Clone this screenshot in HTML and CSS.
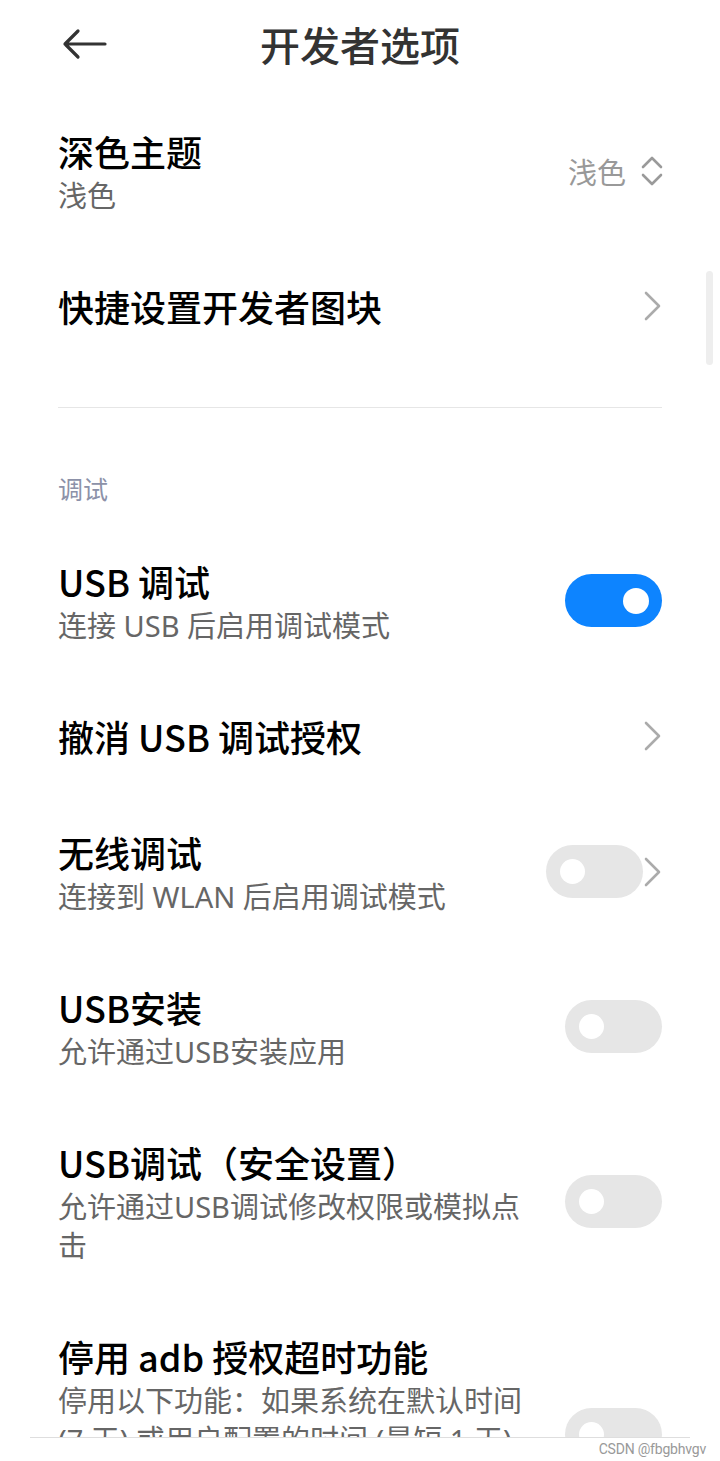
FILE: index.html
```html
<!DOCTYPE html>
<html lang="zh-CN">
<head>
<meta charset="utf-8">
<title>开发者选项</title>
<link rel="stylesheet" href="styles.css">
</head>
<body>
<div class="screen">
  <header class="topbar">
    <div class="back">
      <svg width="46" height="32" viewBox="0 0 46 32"><path d="M4 16 H44 M17 3 L4 16 L17 29" fill="none" stroke="#333" stroke-width="3.2" stroke-linecap="round" stroke-linejoin="round"/></svg>
    </div>
    <h1 class="title-main">开发者选项</h1>
    <div></div>
  </header>

  <main class="list">
    <div class="row">
      <div class="text"><div class="title">深色主题</div><div class="sub">浅色</div></div>
      <div class="value">浅色
        <svg class="updown" width="22" height="32" viewBox="0 0 22 32"><path d="M2 12 L11 3 L20 12 M2 20 L11 29 L20 20" fill="none" stroke="#9a9a9a" stroke-width="2.6" stroke-linecap="round" stroke-linejoin="round"/></svg>
      </div>
    </div>
    <div class="row">
      <div class="text"><div class="title">快捷设置开发者图块</div></div>
      <svg class="chev" width="17" height="30" viewBox="0 0 17 30"><path d="M2 2 L15 15 L2 28" fill="none" stroke="#ababab" stroke-width="2.6" stroke-linecap="round" stroke-linejoin="round"/></svg>
    </div>

    <div class="divider"></div>
    <div class="section">调试</div>

    <div class="row">
      <div class="text"><div class="title">USB 调试</div><div class="sub">连接 USB 后启用调试模式</div></div>
      <div class="switch on"><span class="knob"></span></div>
    </div>
    <div class="row">
      <div class="text"><div class="title">撤消 USB 调试授权</div></div>
      <svg class="chev" width="17" height="30" viewBox="0 0 17 30"><path d="M2 2 L15 15 L2 28" fill="none" stroke="#ababab" stroke-width="2.6" stroke-linecap="round" stroke-linejoin="round"/></svg>
    </div>
    <div class="row">
      <div class="text"><div class="title">无线调试</div><div class="sub">连接到 WLAN 后启用调试模式</div></div>
      <div class="combo">
        <div class="switch"><span class="knob"></span></div>
        <svg class="chev" width="17" height="30" viewBox="0 0 17 30"><path d="M2 2 L15 15 L2 28" fill="none" stroke="#ababab" stroke-width="2.6" stroke-linecap="round" stroke-linejoin="round"/></svg>
      </div>
    </div>
    <div class="row">
      <div class="text"><div class="title">USB安装</div><div class="sub">允许通过USB安装应用</div></div>
      <div class="switch"><span class="knob"></span></div>
    </div>
    <div class="row">
      <div class="text"><div class="title">USB调试（安全设置）</div><div class="sub">允许通过USB调试修改权限或模拟点击</div></div>
      <div class="switch"><span class="knob"></span></div>
    </div>
    <div class="row">
      <div class="text"><div class="title">停用 adb 授权超时功能</div><div class="sub">停用以下功能：如果系统在默认时间(7 天) 或用户配置的时间 (最短 1 天) 内未重新连接，则自动撤消 adb 授权。</div></div>
      <div class="switch"><span class="knob"></span></div>
    </div>
  </main>

  <div class="scrollbar"></div>
  <footer class="footer"><span class="mark">CSDN @fbgbhvgv</span></footer>
</div>
</body>
</html>
```

FILE: styles.css
```css
html, body {
  margin: 0;
  padding: 0;
  background: #fff;
}
body {
  font-family: "Noto Sans CJK SC", "Noto Sans", sans-serif;
  color: #000;
}
.screen {
  position: relative;
  width: 720px;
  height: 1461px;
  overflow: hidden;
  background: #fff;
}
.topbar {
  height: 90px;
  display: grid;
  grid-template-columns: 1fr auto 1fr;
  align-items: center;
  margin-bottom: 3px;
  padding-bottom: 2px;
  box-sizing: border-box;
}
.back {
  padding-left: 61px;
  display: flex;
  align-items: center;
}
.title-main {
  margin: 0;
  font-size: 40px;
  font-weight: 500;
  color: #333;
  line-height: 50px;
}
.list {
  padding: 0 58px;
}
.row {
  display: flex;
  align-items: center;
  padding: 33px 0;
}
.text {
  flex: 1;
  min-width: 0;
}
.title {
  font-size: 36px;
  line-height: 50px;
  font-weight: 500;
  color: #000;
  white-space: nowrap;
}
.sub {
  font-family: "Noto Sans", "Noto Sans CJK SC", sans-serif;
  font-size: 29px;
  line-height: 39px;
  color: #666;
}
.value {
  display: flex;
  align-items: center;
  gap: 15px;
  font-size: 29px;
  color: #999;
  margin-right: -1px;
}
.chev {
  display: block;
  margin-right: 1px;
}
.divider {
  height: 1px;
  background: #e6e6e6;
  margin-top: 43px;
}
.section {
  margin-top: 62px;
  margin-bottom: 17px;
  font-size: 25px;
  line-height: 36px;
  color: #8c91a8;
}
.switch {
  position: relative;
  flex: none;
  width: 97px;
  height: 53px;
  border-radius: 27px;
  background: #e6e6e6;
  margin-left: 30px;
}
.switch .knob {
  position: absolute;
  top: 14px;
  left: 14px;
  width: 25px;
  height: 25px;
  border-radius: 50%;
  background: #fff;
}
.switch.on {
  background: #0d84ff;
}
.switch.on .knob {
  left: auto;
  right: 13px;
  top: 13.5px;
  width: 26px;
  height: 26px;
}
.combo {
  display: flex;
  align-items: center;
  gap: 1px;
}
.combo .switch {
  margin-left: 0;
}
.scrollbar {
  position: absolute;
  left: 706px;
  top: 271px;
  width: 7px;
  height: 94px;
  border-radius: 4px;
  background: #eeeeee;
}
.footer {
  position: absolute;
  left: 0;
  right: 0;
  bottom: 0;
  height: 24px;
  background: #fff;
  display: flex;
  justify-content: flex-end;
  align-items: flex-start;
}
.footer::before {
  content: "";
  position: absolute;
  left: 30px;
  right: 30px;
  top: 0;
  height: 1px;
  background: #dedede;
}
.mark {
  font-family: Roboto, "Liberation Sans", sans-serif;
  font-size: 14px;
  line-height: 18px;
  color: #999;
  margin-top: 3px;
  margin-right: 14px;
  letter-spacing: -0.2px;
}
```
